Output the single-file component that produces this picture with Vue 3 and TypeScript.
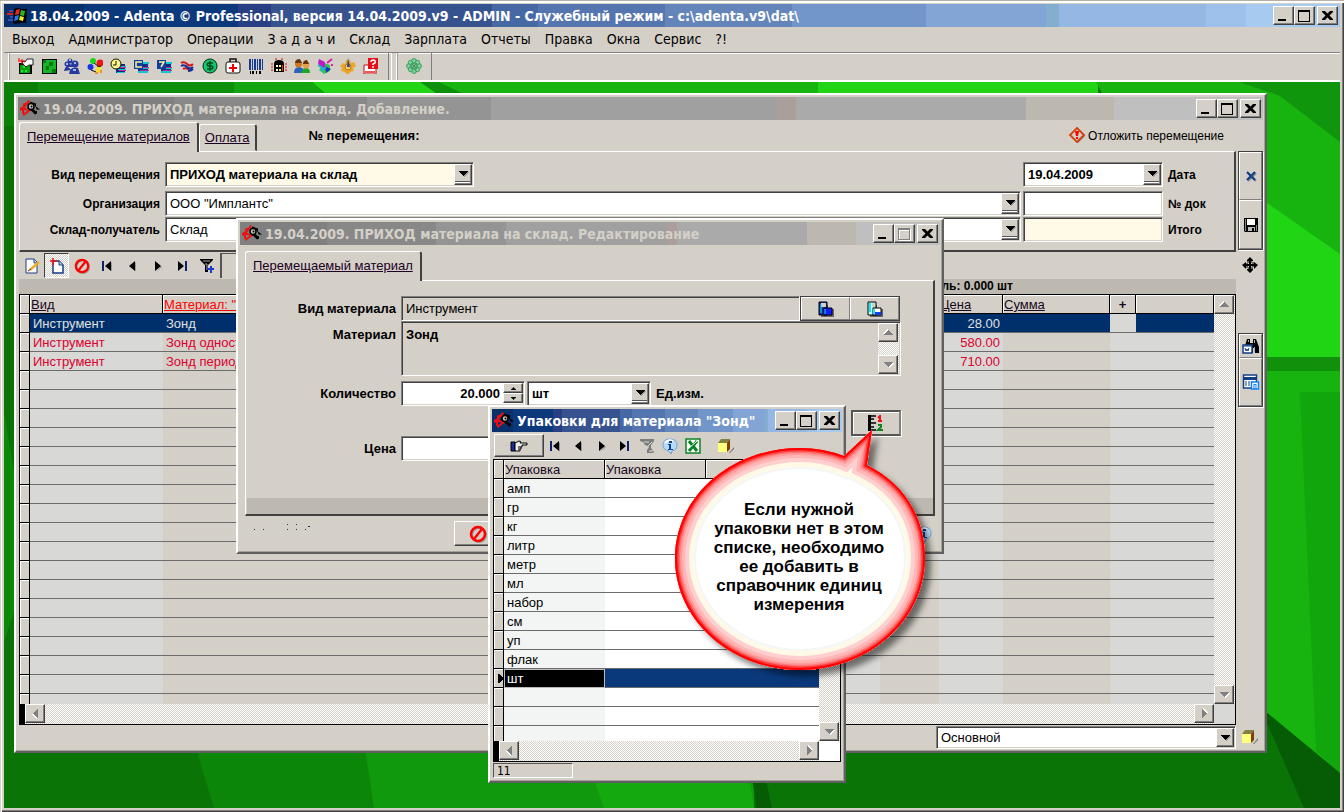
<script setup lang="ts">
import { ref } from 'vue'

interface Material {
  kind: string
  name: string
  price: string
  selected?: boolean
}

const menu = ['Выход', 'Администратор', 'Операции', 'З а д а ч и', 'Склад', 'Зарплата', 'Отчеты', 'Правка', 'Окна', 'Сервис', '?!']
const tools = ['hand', 'board', 'people', 'balloons', 'clock', 'cash', 'seven', 'waves', 'dollar', 'medkit', 'barcode', 'arch', 'faces', 'pie', 'gear', 'help']
const nav = ['first', 'prev', 'next', 'last']
const materials: Material[] = [
  { kind: 'Инструмент', name: 'Зонд', price: '28.00', selected: true },
  { kind: 'Инструмент', name: 'Зонд односторонний', price: '580.00' },
  { kind: 'Инструмент', name: 'Зонд периодонтальный', price: '710.00' },
]
const packs = ['амп', 'гр', 'кг', 'литр', 'метр', 'мл', 'набор', 'см', 'уп', 'флак', 'шт']
const boxes = ['min', 'max', 'close']

const quantity = ref('20.000')
const price = ref('')
const docNumber = ref('')
const total = ref('')
</script>

<template>
  <svg class="defs" aria-hidden="true">
    <symbol id="min" viewBox="0 0 21 19"><path d="M5 13h8v2H5z" /></symbol>
    <symbol id="max" viewBox="0 0 21 19"><path d="M4 4h12v12H4zM5 6v9h10V6z" fill-rule="evenodd" /></symbol>
    <symbol id="close" viewBox="0 0 21 19"><path d="M5 5h3l2.500 2.500L13 5h3v1l-3.500 3.500L16 13v1h-3l-2.500-2.500L8 14H5v-1l3.500-3.500L5 6z" /></symbol>
    <symbol id="down" viewBox="0 0 9 5"><path d="M0 0h9v1H8v1H7v1H6v1H5v1H4V4H3V3H2V2H1V1H0z" /></symbol>
    <symbol id="star" viewBox="0 0 20 16">
      <path d="M9 0 7 3 4 4v2L0 9h3v3l1 2 4-3 3-2" fill="none" stroke="#f01010" stroke-width="2" />
      <path d="M9 1 4 7l4 3M2 9h6" fill="none" stroke="#f01010" stroke-width="1.500" />
      <path d="m10 1 6 2v3l4 3h-3v4l-2 1-3-3-3-2 2-1 3 1 2 2 1-1-1-3-2-3-4-1z" />
      <circle cx="11" cy="6" r="3" fill="#c9c5bd" stroke="#000" stroke-width="1.500" /><circle cx="11.500" cy="6" r="1" />
    </symbol>
    <symbol id="winlogo" viewBox="0 0 20 17">
      <path d="M7 2q4-2 7 0l6 0-1 14q-4-1-6 0-4 1-7 0z" />
      <path d="m9 3 4-1-1 5-4 1z" fill="#e22" /><path d="m14 3 4 1-1 5-4-1z" fill="#2b2" /><path d="m8 9 4-1-1 5-4 1z" fill="#27e" /><path d="m13 9 4 1-1 4-4-1z" fill="#ee2" />
      <path d="M2 3h4v2H2zM1 12h5v2H1zM3 9h3v2H3z" fill="#3450b8" /><path d="M0 6h6v2H0zM2 4h3v1H2z" fill="#d22" />
    </symbol>
    <symbol id="hand" viewBox="0 0 16 16">
      <path d="M1 5h13v11H1z" /><path d="M2 7h10v8H2z" fill="#0b9f16" /><path d="M3 12h2v2H3zM7 12h2v2H7zM5 8h2v2H5z" fill="#26e628" />
      <path d="m4 3 3 1 2-3h6v6h-4l-3 2-3-3z" fill="#fff" stroke="#222" /><path d="M1 0v3M0 3h7M4 1v6" fill="none" stroke="#f00" />
    </symbol>
    <symbol id="board" viewBox="0 0 16 16">
      <path d="M1 1h15v15H1z" /><path d="M2 2h13v13H2z" fill="#14b827" /><path d="M2 8h6V4h4v4H8v4H5V8M11 11h4v4h-4M2 2h3v3H2z" fill="#087914" />
    </symbol>
    <symbol id="people" viewBox="0 0 16 16">
      <g fill="#27389f"><circle cx="6" cy="3" r="2.500" /><path d="M2 9q4-6 8 0z" /><circle cx="3" cy="6" r="2.500" /><path d="M0 13q2-8 7-1z" /><circle cx="11" cy="6" r="3.500" /><path d="M5 16q1-8 9-6l2 6z" /></g>
      <path d="M5 1h2v2H5zM2 5h2v2H2zM10 4h2v2h-2zM9 11h3v2H9z" fill="#9eb7ee" />
    </symbol>
    <symbol id="balloons" viewBox="0 0 16 16">
      <circle cx="6" cy="3" r="3" fill="#12d820" /><circle cx="13" cy="5" r="3.500" fill="#f01414" /><circle cx="3.500" cy="9" r="3" fill="#1235df" />
      <path d="m9 16 2-8m-7 4 5 2m2-5 3-1M11 8l-4-3" stroke="#111" fill="none" /><path d="M9 9h5v5H9z" fill="#f5dd31" /><path d="M8 14h3v2H8zM13 12h2v3h-2z" fill="#ea9620" />
    </symbol>
    <symbol id="clock" viewBox="0 0 16 16">
      <path d="M6 6h9v9H6z" fill="#112a80" /><path d="M8 8h8v1H8zM8 11h8v1H8zM7 14h8v1H7z" fill="#12c8d0" /><path d="M9 9h7v1H9zM9 12h7v1H9z" fill="#bb2c9c" />
      <circle cx="6" cy="6" r="5" fill="#fff68b" stroke="#151500" /><path d="M6 3v4H3" fill="none" stroke="#111" />
    </symbol>
    <symbol id="cash" viewBox="0 0 16 16">
      <path d="M5 5h10v10H5z" fill="#142d82" /><path d="M7 4h9v2H7zM6 10h10v1H6zM5 13h10v2H5z" fill="#10c5cf" /><path d="M9 9h7v1H9zM7 12h9v1H7z" fill="#b92d9f" />
      <path d="M1 2h9v9H1z" fill="#123da0" /><path d="M9 4H3v5h6" stroke="#fff58c" stroke-width="1.500" fill="none" />
    </symbol>
    <symbol id="seven" viewBox="0 0 16 16">
      <path d="M5 5h10v10H5z" fill="#142d82" /><path d="M7 4h9v2H7zM6 10h10v1H6zM5 13h10v2H5z" fill="#10c5cf" /><path d="M9 9h7v1H9zM7 12h9v1H7z" fill="#b92d9f" />
      <path d="M1 2h9v9H1z" fill="#123da0" /><path d="M3 4h5L5 9" stroke="#fff58c" stroke-width="1.500" fill="none" />
    </symbol>
    <symbol id="waves" viewBox="0 0 16 16">
      <path d="M2 5q3-2 6 1t6 0M4 11q3-2 6 1" stroke="#d01919" stroke-width="2" fill="none" /><path d="M2 8q3-2 6 1t6 0M9 13q3 0 5-2" stroke="#152d9d" stroke-width="2" fill="none" />
    </symbol>
    <symbol id="dollar" viewBox="0 0 16 16">
      <circle cx="8" cy="8" r="7" fill="#10c86d" stroke="#092913" /><path d="M11 5H7q-3 0-1 3h4q2 3-1 3H5M8 3v10" fill="none" stroke="#042" stroke-width="1.500" />
    </symbol>
    <symbol id="medkit" viewBox="0 0 16 16">
      <path d="M5 4V1h6v3" fill="none" stroke="#111" stroke-width="1.500" /><rect x="1" y="4" width="14" height="11" rx="2" fill="#fff" stroke="#111" /><path d="M7 6h2v3h3v2H9v3H7v-3H4V9h3z" fill="#e00" />
    </symbol>
    <symbol id="barcode" viewBox="0 0 16 16">
      <path d="M1 1h2v11H1zM4 1h1v11H4zM6 1h2v11H6zM9 1h1v11H9zM11 1h2v11h-2zM14 1h1v11h-1z" fill="#173a92" /><path d="M2 13h1v3H2zM4 13h2v3H4zM8 13h1v3H8zM11 13h2v3h-2z" />
    </symbol>
    <symbol id="arch" viewBox="0 0 16 16">
      <path d="M3 14V6q0-4 5-4t5 4v8z" /><path d="M5 7h2v2H5zM5 11h2v2H5z" fill="#fff" /><path d="M8 7h2v2H8zM8 11h2v2H8z" fill="#ef2" /><path d="M11 7h1v6h-1z" fill="#e33" />
      <path d="M1 5v9M15 5v9M4 1h2M10 1h2" stroke="#e00" stroke-dasharray="2 1" />
    </symbol>
    <symbol id="faces" viewBox="0 0 16 16">
      <path d="M0 15q0-6 5-6t5 6z" fill="#2962c0" /><path d="M7 15q1-5 5-5t4 5z" fill="#1fa52a" /><circle cx="4.500" cy="6" r="3.500" fill="#cf7626" /><circle cx="12" cy="7" r="3.500" fill="#e5a04c" /><path d="M1 5q0-4 5-4l2 4zM9 6q0-4 4-4l2 4z" fill="#69330d" />
    </symbol>
    <symbol id="pie" viewBox="0 0 16 16">
      <path d="m7 5 6 2v6l-6 3-5-4z" fill="#30c750" /><path d="m2 1 6 3v8L3 9 1 5z" fill="#bc1cc4" /><path d="m8 8 6 3-5 4z" fill="#1836bd" /><path d="M10 5l5-4M14 7h2" stroke="#e21ba3" stroke-width="2" /><path d="M1 7l6 4M4 13l5-4" stroke="#13b7d0" stroke-width="2" />
    </symbol>
    <symbol id="gear" viewBox="0 0 16 16">
      <path d="M6 2h4l1 3 3-1 2 4-3 2 1 3-4 1-1 2H6l-1-2-4-1 1-3-2-2 3-3 2 1z" fill="#eca62b" /><circle cx="8" cy="9" r="3" fill="#f7cf72" stroke="#b97814" /><path d="M8 0 10 9H7z" fill="#26429d" />
    </symbol>
    <symbol id="help" viewBox="0 0 16 16">
      <path d="M1 7h12v9H1z" fill="#fff" stroke="#b11" /><path d="M2 13h10v2H2z" fill="#e55" /><path d="M5 0h10v11H5z" fill="#e40d18" /><path d="M8 4q0-2 2-2 3 0 2 3l-2 1v1m0 1v2" stroke="#fff" stroke-width="1.500" fill="none" />
    </symbol>
    <symbol id="clover" viewBox="0 0 16 16">
      <g fill="#7ed09b" stroke="#278b4c" stroke-width=".7"><circle cx="8" cy="3" r="2.500" /><circle cx="8" cy="13" r="2.500" /><circle cx="3" cy="8" r="2.500" /><circle cx="13" cy="8" r="2.500" /><circle cx="4.500" cy="4.500" r="2.200" /><circle cx="11.500" cy="4.500" r="2.200" /><circle cx="4.500" cy="11.500" r="2.200" /><circle cx="11.500" cy="11.500" r="2.200" /></g>
      <path d="m5 5 6 6m0-6-6 6M8 4v8M4 8h8" stroke="#399b59" />
    </symbol>
    <symbol id="first" viewBox="0 0 16 16"><path d="M3 3h2v10H3z" fill="#102070" /><path d="M12 4v9h1V5z" fill="#999" /><path d="M12 3v10L6 8z" /></symbol>
    <symbol id="prev" viewBox="0 0 16 16"><path d="M11 4v9h1V5z" fill="#999" /><path d="M11 3v10L5 8z" /></symbol>
    <symbol id="next" viewBox="0 0 16 16"><path d="m7 14 6-5-1-1z" fill="#999" /><path d="M6 3v10l6-5z" /></symbol>
    <symbol id="last" viewBox="0 0 16 16"><path d="M4 3v10l6-5z" /><path d="M11 3h2v10h-2z" fill="#102070" /></symbol>
    <symbol id="edit" viewBox="0 0 16 16"><path d="M2 1h8l3 3v11H2z" fill="#fff" stroke="#1b3d7d" /><path d="M10 1v4h3" fill="#d5e4fa" stroke="#1b3d7d" /><path d="m6 12 9-8" stroke="#efad25" stroke-width="2.500" /><path d="m4 13 3-2" stroke="#333" /></symbol>
    <symbol id="new" viewBox="0 0 16 16"><path d="M4 3h6l4 4v8H4z" fill="#fff" stroke="#153d86" stroke-width="1.500" /><path d="M10 3v4h4" fill="#bcd3ef" stroke="#153d86" /><path d="M4 0v7M1 3h7" stroke="#e11" stroke-width="1.500" /></symbol>
    <symbol id="ban" viewBox="0 0 18 18"><circle cx="10" cy="10" r="7" fill="none" stroke="#999" stroke-width="2" /><circle cx="9" cy="9" r="7" fill="none" stroke="#f00" stroke-width="2.500" /><path d="M13 4 5 14" stroke="#f00" stroke-width="2.500" /></symbol>
    <symbol id="filter" viewBox="0 0 16 16"><path d="M1 1h13v1l-5 5v7H6V7L1 2z" /><path d="M4 3h7M6 6h2v6" stroke="#aaa" fill="none" /><path d="M12 8v7M8 11h7" stroke="#1739d5" stroke-width="2" /></symbol>
    <symbol id="nofilter" viewBox="0 0 16 16"><path d="M1 1h14v2l-3 4v3l3 4-1 1H8v-3l2-3-1-1-3-1-2-3-3-1z" fill="#7c7c7c" /><path d="M5 4h5M9 8l4-4M10 13h4" stroke="#ddd" /></symbol>
    <symbol id="warn" viewBox="0 0 18 18"><path d="m10 2 7 7-7 7-7-7z" fill="#777" /><path d="m9 1 7 7-7 7-7-7z" fill="#d4d0c8" stroke="#d4410a" stroke-width="1.800" /><path d="M7 4h4l-1 5H8zM8 10h2v2H8z" fill="#f00" /></symbol>
    <symbol id="x" viewBox="0 0 16 16"><path d="m5 5 8 8m0-8-8 8" stroke="#888" stroke-width="2" /><path d="m4 4 8 8m0-8-8 8" stroke="#103f87" stroke-width="2.200" /></symbol>
    <symbol id="disk" viewBox="0 0 16 16"><path d="M1 1h14v14H2l-1-1z" /><path d="M4 2h8v6H4z" fill="#fff" /><path d="M5 10h7v4H5z" fill="#bbb" /><path d="M9 11h2v3H9z" /><path d="M2 2h1v12H2zM13 8h1v6h-1z" fill="#888" /></symbol>
    <symbol id="move" viewBox="0 0 16 16"><path d="m8 0 3 3v1H9v3h3V5l4 3-4 4V9H9v3h2v1l-3 3-3-3v-1h2V9H4v3L0 8l4-3v2h3V4H5V3z" /><path d="M5 5h6v6H5z" fill="none" stroke="#000" stroke-dasharray="2 1" /></symbol>
    <symbol id="find" viewBox="0 0 18 16"><path d="M5 1h3v4h3V1h3l3 8v6h-4v-5h-2v5H8V8H3z" /><path d="M6 2h1v2H6zM12 2h1v3h-1zM12 9h1v5h-1z" fill="#aaa" /><path d="M1 7h9v8H1z" fill="#fff" stroke="#103f87" stroke-width="1.500" /><path d="M1 8h9M3 10l1 3 1-2 1 2 1-3" stroke="#103f87" fill="none" /></symbol>
    <symbol id="sheet" viewBox="0 0 17 16"><path d="M1 1h13v13H1z" fill="#fff" stroke="#103f87" stroke-width="1.500" /><path d="M1 3h13v3H1zM3 7h1v5H3zM6 7h1v5H6zM9 7h1v5H9z" fill="#103f87" /><path d="M9 8h7v7H9z" fill="#fff" stroke="#1283ed" stroke-width="1.500" /><path d="M11 10h3v5h-1v-4h-1v4h-1z" fill="#1283ed" /></symbol>
    <symbol id="cube" viewBox="0 0 18 16"><path d="m12 15 5-6v2l-4 4z" fill="#777" /><path d="M1 5h9v9H1z" fill="#ffff80" /><path d="m1 5 3-4h9l-3 4z" fill="#808040" /><path d="m10 5 3-4v10l-3 3z" fill="#804000" /></symbol>
    <symbol id="blocks" viewBox="0 0 16 16"><path d="M3 4h7v12H3zM7 8h9v8H7z" fill="#666" /><path d="M1 1h8v13H1z" fill="#1230a6" stroke="#000" /><path d="M3 2h5v4H3z" fill="#d4d0c8" /><path d="M6 7h8v7H6z" fill="#111cff" stroke="#000" /><path d="M3 3v9M7 8v5" stroke="#19e5ed" /></symbol>
    <symbol id="blocks2" viewBox="0 0 16 16"><path d="M3 4h7v12H3zM7 8h9v8H7z" fill="#666" /><path d="M1 1h8v13H1z" fill="#bff" stroke="#000" /><path d="M5 2h3v5H5z" fill="#d4d0c8" /><path d="M6 7h8v7H6z" fill="#fff" stroke="#000" /><path d="M3 2v9M7 8v5" stroke="#19e5ed" stroke-width="2" /><path d="M8 11h6v3H8z" fill="#123eef" /></symbol>
    <symbol id="ruler" viewBox="0 0 16 16"><path d="M0 0h3v16H0z" /><path d="M3 1h5M3 4h3M3 8h5M3 12h3M3 15h5" stroke="#000" stroke-width="1.500" /><path d="M10 3l2-2v5m-2 0h4" stroke="#e11" stroke-width="2" fill="none" /><path d="M10 10h3v2l-3 3h5" stroke="#108220" stroke-width="2" fill="none" /></symbol>
    <symbol id="point" viewBox="0 0 18 14"><path d="M1 3h4v9H1z" fill="#182f99" stroke="#000" /><path d="M5 4l4-2q3 0 1 2h7v2h-5v2h-1v2h-1v2H5z" fill="#eee" stroke="#000" /><path d="M8 8h3M8 10h2" stroke="#000" /></symbol>
    <symbol id="info" viewBox="0 0 16 16"><path d="M8 1q7 0 7 6 0 5-5 6l-1 3-2-3q-6-1-6-6 0-6 7-6z" fill="#b8dcf8" stroke="#6fa5d4" /><path d="M3 5q3-4 8-2" stroke="#fff" stroke-width="2" fill="none" /><path d="M7 3h3v2H7zM6 6h3v5h2v1H6v-1h1V7H6z" fill="#0c43a3" /></symbol>
    <symbol id="excel" viewBox="0 0 16 16"><path d="M1 1h14v14H1z" fill="#fff" stroke="#0a8222" stroke-width="1.500" /><path d="m4 3 8 10m0-10-8 10" stroke="#078323" stroke-width="3" /><path d="m3 11 9-8" stroke="#fff" /></symbol>
  </svg>

  <main class="app">
    <header class="caption active">
      <svg class="logo"><use href="#winlogo" /></svg>
      <h1>18.04.2009 - Adenta © Professional, версия 14.04.2009.v9 - ADMIN - Служебный режим - c:\adenta.v9\dat\</h1>
      <div class="boxes"><button v-for="b in boxes" :key="b" :aria-label="b"><svg><use :href="'#' + b" /></svg></button></div>
    </header>
    <nav class="menu"><button v-for="m in menu" :key="m">{{ m }}</button></nav>
    <div class="toolbar">
      <div class="band"><button v-for="t in tools" :key="t" :aria-label="t"><svg><use :href="'#' + t" /></svg></button></div>
      <div class="band second"><button aria-label="clover"><svg><use href="#clover" /></svg></button></div>
    </div>

    <div class="desktop">
      <svg class="wall" viewBox="0 0 1336 726" preserveAspectRatio="none" aria-hidden="true">
        <path fill="#0a7406" d="M0 0h1336v726H0z" />
        <path fill="#0f900c" d="M0 0h318l-60 60H0z" />
        <path fill="#0b7f08" d="M0 0h34v48H0z" />
        <path fill="#0a7206" d="M0 44h10v270H0z" />
        <path fill="#22d616" d="M308 0h110l40 14H324z" />
        <path fill="#13a50f" d="M230 0h78l16 14h-94z" />
        <path fill="#0f900c" d="M416 0h18l30 14h-28z" />
        <path fill="#17b50f" d="M434 0h386v14H464z" />
        <path fill="#20d614" d="M814 0h280v14H814z" />
        <path fill="#17b40f" d="M1092 0h244v300h-80z" />
        <path fill="#10960c" d="M1235 0h101v60l-60-46z" />
        <path fill="#20d513" d="M1256 116 1336 172v104h-80z" />
        <path fill="#10900b" d="M1256 275h80v14h-80z" />
        <path fill="#17b40f" d="M1256 289h80v402l-80-66z" />
        <path fill="#12a60d" d="M1296 310h40v381l-24-22z" />
        <path fill="#0c8609" d="M190 660h380v66H210z" />
        <path fill="#10990c" d="M360 660h390v66H370z" />
        <path fill="#14a90f" d="M576 660h164l10 66H600z" />
        <path fill="#065c04" d="M744 660h10l14 66h-16zM1256 625l80 66v35h-36z" />
        <path fill="#0c8909" d="m0 330 10 60v140L0 560z" />
      </svg>

      <section class="win main-win">
        <header class="caption">
          <svg class="star"><use href="#star" /></svg>
          <h2>19.04.2009. ПРИХОД материала на склад. Добавление.</h2>
          <div class="boxes"><button v-for="b in boxes" :key="b" :aria-label="b"><svg><use :href="'#' + b" /></svg></button></div>
        </header>
        <div class="tabs">
          <button class="tab cur"><u>Перемещение материалов</u></button>
          <button class="tab"><u>Оплата</u></button>
          <b class="number">№ перемещения:</b>
          <button class="postpone"><svg><use href="#warn" /></svg>Отложить перемещение</button>
        </div>
        <div class="body">
          <div class="content">
            <form class="panel">
              <div class="row first">
                <label for="move-kind">Вид перемещения</label>
                <div class="fill"><span class="combo kind cream"><select id="move-kind"><option>ПРИХОД материала на склад</option></select><i><svg><use href="#down" /></svg></i></span></div>
                <span class="combo right bold"><select id="date"><option>19.04.2009</option></select><i><svg><use href="#down" /></svg></i></span>
                <label class="after" for="date">Дата</label>
              </div>
              <div class="row">
                <label for="org">Организация</label>
                <div class="fill"><span class="combo"><select id="org"><option>ООО "Имплантс"</option></select><i><svg><use href="#down" /></svg></i></span></div>
                <input id="doc" v-model="docNumber" class="field right">
                <label class="after" for="doc">№ док</label>
              </div>
              <div class="row">
                <label for="store">Склад-получатель</label>
                <div class="fill"><span class="combo"><select id="store"><option>Склад</option></select><i><svg><use href="#down" /></svg></i></span></div>
                <input id="total" v-model="total" class="field right cream">
                <label class="after" for="total">Итого</label>
              </div>
            </form>
            <div class="gridbar">
              <button aria-label="edit"><svg><use href="#edit" /></svg></button>
              <button class="pressed" aria-label="new"><svg><use href="#new" /></svg></button>
              <button aria-label="ban"><svg><use href="#ban" /></svg></button>
              <button v-for="n in nav" :key="n" :aria-label="n"><svg><use :href="'#' + n" /></svg></button>
              <button aria-label="filter"><svg><use href="#filter" /></svg></button>
              <span class="slot"></span>
            </div>
            <div class="summary"><b>Модель: 0.000 шт</b></div>
            <div class="grid">
              <div class="view">
                <div class="clip">
                  <table class="gray">
                    <colgroup><col class="c-ind"><col class="c-kind"><col class="c-name"><col class="c-a"><col class="c-b"><col class="c-price"><col class="c-sum"><col class="c-plus"><col class="c-rest"></colgroup>
                    <thead><tr><th></th><th><u>Вид</u></th><th class="red"><u>Материал: "Зонд"</u></th><th></th><th></th><th><u>Цена</u></th><th><u>Сумма</u></th><th class="plus">+</th><th></th></tr></thead>
                    <tbody>
                      <tr v-for="m in materials" :key="m.name" :class="m.selected ? 'sel' : 'red'">
                        <td></td><td>{{ m.kind }}</td><td>{{ m.name }}</td><td></td><td></td><td class="num">{{ m.price }}</td><td></td><td class="beige"></td><td></td>
                      </tr>
                      <tr v-for="n in 50" :key="n"><td v-for="c in 9" :key="c"></td></tr>
                    </tbody>
                  </table>
                </div>
                <div class="vscroll"><button class="up" aria-label="Вверх"><svg><use href="#down" /></svg></button><button aria-label="Вниз"><svg><use href="#down" /></svg></button></div>
              </div>
              <div class="hscroll"><button class="lt" aria-label="Влево"><svg><use href="#down" /></svg></button><button class="rt" aria-label="Вправо"><svg><use href="#down" /></svg></button><span></span></div>
            </div>
          </div>
          <aside class="side">
            <div class="group"><button class="tall" aria-label="close"><svg><use href="#x" /></svg></button><button class="tall" aria-label="save"><svg><use href="#disk" /></svg></button></div>
            <svg class="move"><use href="#move" /></svg>
            <div class="group"><button class="short" aria-label="find"><svg class="wide"><use href="#find" /></svg></button><button class="tall" aria-label="sheet"><svg class="wide"><use href="#sheet" /></svg></button></div>
          </aside>
        </div>
        <footer class="foot"><span class="combo"><select aria-label="Вид"><option>Основной</option></select><i><svg><use href="#down" /></svg></i></span><svg class="cube"><use href="#cube" /></svg></footer>
      </section>

      <section class="win edit-win">
        <header class="caption">
          <svg class="star"><use href="#star" /></svg>
          <h2>19.04.2009. ПРИХОД материала на склад. Редактирование</h2>
          <div class="boxes"><button v-for="b in boxes" :key="b" :aria-label="b" :disabled="b === 'max'"><svg><use :href="'#' + b" /></svg></button></div>
        </header>
        <div class="edit-body">
          <div class="tabs"><button class="tab cur"><u>Перемещаемый материал</u></button></div>
          <form class="panel">
            <div class="row">
              <label for="mat-kind">Вид материала</label>
              <input id="mat-kind" class="field flat kind-field" value="Инструмент" readonly>
              <div class="pair"><button type="button" aria-label="copy"><svg><use href="#blocks" /></svg></button><button type="button" aria-label="list"><svg><use href="#blocks2" /></svg></button></div>
            </div>
            <div class="row area">
              <label for="mat">Материал</label>
              <div class="memo"><textarea id="mat" readonly>Зонд</textarea><div class="vscroll"><button type="button" class="up" aria-label="Вверх"><svg><use href="#down" /></svg></button><button type="button" aria-label="Вниз"><svg><use href="#down" /></svg></button></div></div>
            </div>
            <div class="row qty">
              <label for="qty">Количество</label>
              <span class="spin"><input id="qty" v-model="quantity"><span><button type="button" class="up" aria-label="Больше"><svg><use href="#down" /></svg></button><button type="button" aria-label="Меньше"><svg><use href="#down" /></svg></button></span></span>
              <span class="combo unit bold"><select id="unit"><option>шт</option></select><i><svg><use href="#down" /></svg></i></span>
              <label class="after" for="unit">Ед.изм.</label>
            </div>
            <div class="row measure"><button type="button" aria-label="ruler"><svg><use href="#ruler" /></svg></button></div>
            <div class="row"><label for="price">Цена</label><input id="price" v-model="price" class="field price"></div>
            <div class="band-bottom"></div>
          </form>
          <footer>
            <svg class="ticks" viewBox="0 0 60 8"><path d="M0 5h1v1H0zM9 5h1v1H9zM33 0h1v1h-1zM33 5h1v1h-1zM42 0h1v1h-1zM42 5h1v1h-1zM51 5h1v1h-1zM54 2h2v1h-2z" fill="#123a70" /></svg>
            <button class="cancel" aria-label="cancel"><svg><use href="#ban" /></svg></button>
            <svg class="ic"><use href="#info" /></svg>
          </footer>
        </div>
      </section>

      <section class="win pack-win">
        <header class="caption active">
          <svg class="star"><use href="#star" /></svg>
          <h2>Упаковки для материала "Зонд"</h2>
          <div class="boxes"><button v-for="b in boxes" :key="b" :aria-label="b"><svg><use :href="'#' + b" /></svg></button></div>
        </header>
        <div class="packbar">
          <button class="choose" aria-label="choose"><svg><use href="#point" /></svg></button>
          <button v-for="n in nav" :key="n" :aria-label="n"><svg><use :href="'#' + n" /></svg></button>
          <button aria-label="nofilter"><svg><use href="#nofilter" /></svg></button>
          <button aria-label="info"><svg><use href="#info" /></svg></button>
          <button aria-label="excel"><svg><use href="#excel" /></svg></button>
          <button class="gap" aria-label="cube"><svg><use href="#cube" /></svg></button>
        </div>
        <div class="grid">
          <div class="view">
            <div class="clip">
              <table class="white">
                <colgroup><col class="c-ind"><col class="c-pack"><col class="c-pack"><col class="c-rest"></colgroup>
                <thead><tr><th></th><th>Упаковка</th><th>Упаковка</th><th></th></tr></thead>
                <tbody>
                  <tr v-for="p in packs" :key="p" :class="{ cursor: p === 'шт' }"><td></td><td>{{ p }}</td><td></td><td></td></tr>
                  <tr v-for="n in 3" :key="n"><td v-for="c in 4" :key="c"></td></tr>
                </tbody>
              </table>
            </div>
            <div class="vscroll"><button class="up" aria-label="Вверх"><svg><use href="#down" /></svg></button><button aria-label="Вниз"><svg><use href="#down" /></svg></button></div>
          </div>
          <div class="hscroll"><button class="lt" aria-label="Влево"><svg><use href="#down" /></svg></button><button class="rt" aria-label="Вправо"><svg><use href="#down" /></svg></button><span></span></div>
        </div>
        <div class="status">11</div>
      </section>

      <div class="balloon">
        <svg viewBox="0 0 270 260" aria-hidden="true">
          <defs>
            <path id="bubble" d="M180 32 208 6 203 41C239 59 261 92 261 134C261 196 205 246 136 246C67 246 11 196 11 134C11 73 67 24 136 24Q159 24 180 32Z" />
            <clipPath id="inside"><use href="#bubble" /></clipPath>
            <filter id="soft"><feGaussianBlur stdDeviation="3" /></filter>
          </defs>
          <use href="#bubble" transform="translate(6 6)" fill="#000" opacity=".5" filter="url(#soft)" />
          <use href="#bubble" fill="#fff" />
          <g clip-path="url(#inside)" fill="none">
            <use href="#bubble" stroke="#f5f6f8" stroke-width="42" />
            <use href="#bubble" stroke="#fff9e8" stroke-width="38" />
            <use href="#bubble" stroke="#ffcfcf" stroke-width="28" />
            <use href="#bubble" stroke="#ffb6b6" stroke-width="20" />
            <use href="#bubble" stroke="#ff9c9c" stroke-width="14" />
            <use href="#bubble" stroke="#ff7474" stroke-width="10" />
            <use href="#bubble" stroke="#ff3c3c" stroke-width="7" />
            <use href="#bubble" stroke="#f00" stroke-width="4" />
          </g>
        </svg>
        <p>Если нужной<br>упаковки нет в этом<br>списке, необходимо<br>ее добавить в<br>справочник единиц<br>измерения</p>
      </div>
    </div>
  </main>
</template>

<style>
body { margin: 0; background: #d4d0c8; overflow: hidden; }
</style>

<style scoped>
.defs { position: absolute; width: 0; height: 0; }
* { box-sizing: border-box; }
.app { --face: #d4d0c8; height: 100vh; min-height: 500px; display: flex; flex-direction: column; padding: 3px 4px 4px; background: var(--face); border-top: 1px solid #b5b1a9; box-shadow: inset 1px 0 #d4d0c8, inset 2px 2px #fff, inset -1px -1px #404040, inset -2px -2px #808080; font: 13px/16px "Liberation Sans", Arial, sans-serif; color: #000; }
button, input, select, textarea { font: inherit; color: inherit; margin: 0; padding: 0; border: 0; background: none; border-radius: 0; outline: 0; }
button { display: flex; align-items: center; justify-content: center; }
svg { display: block; flex: none; }
.caption { height: 23px; flex: none; display: flex; align-items: center; gap: 3px; padding: 0 2px; color: #d4d0c8; background: linear-gradient(90deg, #808080 0 12.500%, #888 0 28%, #949494 0 38%, #a0a0a0 0 61%, #aa9f9b 0 62.500%, #aaa 0 81%, #bcb8b0 0 88%, #bfbfbf 0); }
.caption.active { color: #fff; background: linear-gradient(90deg, #08316b 0 6%, #0b397b 0 17.500%, #293f84 0 20%, #365390 0 36.500%, #4669a5 0 40%, #5475b0 0 49.500%, #6485ba 0 59%, #7296c9 0 69%, #83a5d5 0 78%, #84aecd 0 79%, #94b7e3 0 90%, #9ec1eb 0 93%, #a6caf0 0); }
.caption h1, .caption h2 { flex: 1; min-width: 0; margin: 0; overflow: hidden; white-space: nowrap; font: bold 14px/20px "DejaVu Sans Condensed", "Noto Sans", sans-serif; }
.caption h2 { padding-top: 1px; }
.logo, .star { width: 20px; height: 17px; }
.logo { margin-left: 1px; }
.boxes { display: flex; }
.boxes button { width: 21px; height: 19px; }
.boxes button:last-child { margin-left: 2px; }
.boxes svg { width: 21px; height: 19px; flex: none; fill: #000; }
.boxes button:disabled svg { fill: #808080; filter: drop-shadow(1px 1px #fff); }
.boxes button, .vscroll button, .hscroll button, .combo i, .spin button, .choose, .cancel { background: #d4d0c8; border: 1px solid; border-color: #fff #404040 #404040 #fff; box-shadow: inset -1px -1px #808080; }
.menu { height: 25px; flex: none; display: flex; align-items: center; gap: 14px; padding: 0 0 2px 8px; font: 14px/20px "DejaVu Sans Condensed", "Noto Sans", sans-serif; }
.toolbar { height: 30px; flex: none; display: flex; border-top: 1px solid #808080; border-bottom: 2px solid #fff; box-shadow: inset 0 1px #fff; }
.band { display: flex; align-items: center; gap: 7px; padding: 0 9px 2px 14px; border-right: 1px solid #808080; box-shadow: inset 4px 0 #d4d0c8, inset 5px 0 #fff, inset 6px 0 #a0a0a0; }
.band svg { width: 16px; height: 16px; }
.band.second { margin-left: 2px; padding: 0 9px 2px 14px; border-left: 1px solid #fff; }
.desktop { position: relative; flex: 1; min-height: 0; overflow: hidden; }
.wall { position: absolute; width: 100%; height: 100%; }
.win { position: absolute; display: flex; flex-direction: column; padding: 2px; background: #d4d0c8; border: 2px solid; border-color: #fff #606060 #606060 #fff; box-shadow: inset -1px -1px #a5a29b; }
.main-win { left: 10px; top: 11px; right: 73px; bottom: 55px; }
.edit-win { left: 232px; top: 136px; width: 708px; height: 336px; }
.pack-win { left: 484px; top: 323px; width: 358px; height: 378px; }
.tabs { display: flex; align-items: flex-end; height: 31px; flex: none; padding-left: 1px; }
.tab { height: 27px; padding: 0 5px; color: #1c0024; border: 1px solid; border-color: #fff #404040 transparent #fff; border-right-width: 2px; border-radius: 3px 3px 0 0; }
.tab.cur { position: relative; z-index: 1; height: 30px; margin-bottom: -1px; padding: 0 7px 2px 7px; background: #d4d0c8; border-bottom: 0; }
.number { align-self: center; margin-left: 52px; padding-top: 1px; }
.postpone { align-self: center; margin-left: auto; margin-right: 39px; gap: 2px; font-size: 12px; }
.postpone svg { width: 18px; height: 18px; }
.body { flex: 1; min-height: 0; display: flex; gap: 2px; padding-left: 1px; }
.content { flex: 1; min-width: 0; display: flex; flex-direction: column; }
.panel { border: 1px solid; border-color: #fff #404040 #404040 #fff; border-right-width: 2px; border-bottom-width: 2px; }
.main-win .panel { height: 101px; flex: none; padding-top: 10px; }
.row { display: flex; height: 25px; margin-bottom: 1px; align-items: center; gap: 2px; }
.row.first { margin-bottom: 4px; }
.row label { width: 140px; flex: none; margin-right: 3px; text-align: right; font-weight: bold; font-size: 12px; }
.row label.after { width: 66px; margin: 0 0 0 3px; text-align: left; }
.fill { flex: 1; min-width: 0; display: flex; }
.combo, .field, .memo, .spin { height: 25px; background: #fff; border: 1px solid; border-color: #808080 #fff #fff #808080; box-shadow: inset 1px 1px #404040, inset -1px -1px #d4d0c8; }
.combo { position: relative; display: block; flex: 1; }
.combo.kind { flex: none; width: 309px; font-weight: bold; }
.cream { background: #fffae8; }
.bold { font-weight: bold; }
.combo.right, .field.right { flex: none; width: 140px; }
.combo select { appearance: none; width: 100%; height: 100%; padding: 0 22px 0 4px; }
.combo i { position: absolute; top: 1px; right: 1px; bottom: 1px; width: 18px; padding-top: 6px; pointer-events: none; background: linear-gradient(#d4d0c8 16px, #555 0 17px, #fff 0 18px, #d4d0c8 0); }
.combo i svg { width: 9px; height: 5px; margin: 0 auto; filter: drop-shadow(1px 1px #999); }
.field { padding: 0 4px; }
.flat { background: #d4d0c8; }
.gridbar { height: 27px; flex: none; display: flex; align-items: center; }
.gridbar button { width: 25px; height: 25px; }
.gridbar svg { width: 16px; height: 16px; }
.gridbar .pressed { border: 1px solid; border-color: #404040 #fff #fff #404040; background: repeating-conic-gradient(#fff 0 25%, #d4d0c8 0 50%) 0 0 / 2px 2px; }
.slot { width: 600px; height: 25px; margin-left: 1px; border-left: 2px solid #555; border-top: 1px solid #555; }
.summary { height: 15px; flex: none; background: #bdb9b1; padding-right: 223px; text-align: right; font-size: 12px; line-height: 15px; }
.grid { flex: 1; min-height: 0; display: flex; flex-direction: column; border: 1px solid #000; }
.view { flex: 1; min-height: 0; display: flex; }
.clip { flex: 1; min-width: 0; overflow: hidden; }
table { width: 100%; table-layout: fixed; border-collapse: separate; border-spacing: 0; }
tr { height: 19px; }
th { height: 19px; padding: 1px 1px 0; overflow: hidden; text-align: left; font-weight: normal; white-space: nowrap; line-height: 17px; background: #d4d0c8; border-right: 1px solid #000; border-bottom: 1px solid #000; box-shadow: inset 1px 1px #fff; color: #1a0820; }
th.plus { text-align: center; font-weight: bold; }
td { height: 19px; padding: 1px 3px 0; overflow: hidden; white-space: nowrap; line-height: 17px; border-bottom: 1px solid #6c6c6c; }
td:first-child { background: #d4d0c8; border-right: 1px solid #000; border-bottom-color: #000; box-shadow: inset 1px 1px #fff; }
.c-ind { width: 10px; }
.c-kind { width: 133px; }
.c-a { width: 300px; }
.c-b { width: 59px; }
.c-price { width: 64px; }
.c-sum { width: 107px; }
.c-plus { width: 26px; }
.c-rest { width: 78px; }
.gray td:nth-child(even), .gray td:last-child { background: #d8d8d6; }
.gray td { background: #d4d0c8; }
.red { color: #dc0030; }
th.red { color: #f00; }
.num { text-align: right; }
.gray .beige { background: #d4d0c8; }
.gray .sel td:not(:first-child):not(.beige) { background: #00306b; color: #e0e0e0; }
.vscroll, .hscroll { flex: none; display: flex; justify-content: space-between; background: repeating-conic-gradient(#fff 0 25%, #d4d0c8 0 50%) 0 0 / 2px 2px; }
.vscroll { flex-direction: column; width: 21px; }
.vscroll button, .hscroll button { width: 20px; height: 19px; }
.vscroll svg, .hscroll svg { width: 9px; height: 5px; fill: #808080; filter: drop-shadow(1px 1px #fff); }
.up svg { transform: rotate(180deg); }
.hscroll { height: 20px; border-left: 5px solid #000; }
.hscroll span { width: 21px; background: #d8d8d6; }
.lt { margin-right: auto; }
.lt svg { transform: rotate(90deg); }
.rt svg { transform: rotate(-90deg); }
.side { width: 25px; }
.group { border: 1px solid #404040; box-shadow: 1px 1px #fff; }
.group button { width: 100%; border: 1px solid; border-color: #fff #808080 #808080 #fff; }
.tall { height: 48px; }
.group .tall + .tall { height: 49px; }
.short { height: 24px; }
.side svg { width: 16px; height: 16px; }
.side svg.wide { width: 18px; }
.side svg.move { margin: 7px auto 60px 4px; }
.foot { height: 24px; flex: none; display: flex; align-items: center; justify-content: flex-end; gap: 5px; padding-right: 4px; }
.foot .combo { flex: none; width: 300px; height: 23px; }
.foot .combo select { padding-top: 1px; }
.cube { width: 18px; height: 16px; }
.edit-body { flex: 1; display: flex; flex-direction: column; padding: 5px 5px 4px 5px; }
.edit-body .tabs { height: 30px; padding: 0; }
.edit-body .panel { height: 236px; display: flex; flex-direction: column; padding-top: 15px; }
.edit-body .row label { width: 150px; margin-right: 3px; font-size: 13px; }
.edit-body .row label.after { width: 67px; margin: 0 0 0 3px; }
.edit-body .row { margin: 0; flex: none; }
.kind-field { width: 399px; }
.pair { display: flex; border: 1px solid #404040; margin-left: -2px; }
.pair button { width: 49px; height: 23px; border: 1px solid; border-color: #fff #808080 #808080 #fff; }
.pair svg, .measure svg { width: 16px; height: 16px; }
.row.area { height: 55px; align-items: flex-start; }
.area label { padding-top: 6px; }
.memo { display: flex; width: 500px; height: 55px; padding: 1px; background: #d4d0c8; }
.memo textarea { flex: 1; resize: none; padding: 4px 3px; font-weight: bold; }
.edit-body .row.qty { margin-top: 5px; }
.spin { display: flex; width: 124px; padding: 1px; }
.spin input { flex: 1; min-width: 0; text-align: right; padding-right: 3px; font-weight: bold; }
.spin button { width: 20px; height: 10px; }
.spin svg { width: 5px; height: 3px; }
.combo.unit { flex: none; width: 124px; }
.edit-body .row.measure { height: 26px; margin-top: 4px; padding-left: 605px; }
.measure button { width: 50px; height: 26px; border: 2px solid; border-color: #555 #808080 #555 #555; box-shadow: inset 1px 1px #fff, 1px 1px #fff; }
.price { width: 124px; }
.band-bottom { height: 16px; margin: auto 0 0 1px; background: #bdb9b1; }
.edit-body footer { display: flex; align-items: center; padding: 5px 3px 0 9px; }
.ticks { width: 60px; height: 8px; margin-top: -11px; }
.cancel { justify-content: flex-start; width: 90px; height: 25px; margin-left: 140px; padding-left: 14px; }
.cancel svg { width: 18px; height: 18px; }
.ic { width: 16px; height: 16px; margin-left: auto; }
.packbar { height: 27px; flex: none; display: flex; align-items: center; padding-left: 2px; }
.packbar button { width: 23px; height: 23px; }
.packbar .choose { width: 50px; margin-right: -1px; }
.packbar svg { width: 16px; height: 16px; }
.packbar .choose svg, .packbar .gap svg { width: 18px; }
.packbar .gap { margin-left: 10px; }
.pack-win .grid { margin: 0 1px; background: #fff; }
.c-pack { width: 101px; }
.pack-win .c-rest { width: auto; }
.white td:nth-child(2) { background: #f3f5f4; }
.white .cursor td { background: #0a397b; }
.white .cursor td:first-child { background: linear-gradient(#000, #000) 4px 5px / 2px 9px no-repeat, linear-gradient(#000, #000) 6px 6px / 1px 7px no-repeat, linear-gradient(#000, #000) 7px 7px / 1px 5px no-repeat, linear-gradient(#000, #000) 8px 8px / 1px 3px no-repeat, #d4d0c8; }
.white .cursor td:nth-child(2) { background: #000; color: #fff; outline: 1px solid #bbb; outline-offset: -1px; }
.pack-win .hscroll span { background: #fff; }
.status { height: 15px; flex: none; width: 80px; margin: 1px; padding-left: 3px; line-height: 14px; font-family: "DejaVu Sans Condensed", sans-serif; font-size: 12px; border: 1px solid; border-color: #555 #fff #fff #555; }
.balloon { position: absolute; left: 660px; top: 342px; width: 270px; height: 260px; }
.balloon svg { position: absolute; width: 270px; height: 260px; overflow: visible; }
.balloon p { position: relative; margin: 76px 0 0; text-align: center; font-weight: bold; font-size: 17px; line-height: 19px; white-space: nowrap; }
</style>
